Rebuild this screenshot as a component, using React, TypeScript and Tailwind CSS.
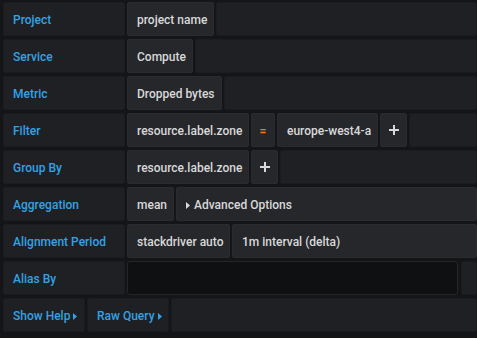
const font = { fontFamily: "Roboto, 'Noto Sans', sans-serif" };

function Label({ children, w = "w-[122px]" }: { children: React.ReactNode; w?: string }) {
  return (
    <div
      className={`${w} flex h-[34px] shrink-0 items-center rounded-[2px] border border-[#1b1c1f] bg-[#1f2023] pl-[9px] pt-[2px] text-[12px] font-medium text-[#33a2e5]`}
    >
      {children}
    </div>
  );
}

function Cell({ children, w, grow }: { children: React.ReactNode; w?: string; grow?: boolean }) {
  return (
    <div
      className={`${w ?? ""} ${grow ? "grow" : "shrink-0"} flex h-[34px] items-center whitespace-nowrap rounded-[2px] border border-[#2a2b2f] bg-[#26272a] pl-[9px] pt-[2px] text-[12px] font-medium text-[#d8d9da]`}
    >
      {children}
    </div>
  );
}

function Filler() {
  return <div className="h-[34px] grow rounded-[2px] border border-[#1b1c1f] bg-[#1f2023]" />;
}

function Plus() {
  return (
    <svg width="10" height="10" viewBox="0 0 10 10" className="mx-auto">
      <rect x="4" y="0" width="2" height="10" fill="#d8d9da" />
      <rect x="0" y="4" width="10" height="2" fill="#d8d9da" />
    </svg>
  );
}

function Caret({ color }: { color: string }) {
  return (
    <svg width="4" height="7" viewBox="0 0 4 7" className="shrink-0">
      <path d="M0 0 L4 3.5 L0 7 Z" fill={color} />
    </svg>
  );
}

export default function App() {
  return (
    <div style={font} className="h-[338px] w-[477px] overflow-hidden bg-[#141517]">
      <div className="flex flex-col gap-[3px] pl-[3px] pt-[2px]">
        <div className="flex gap-[2px]">
          <Label>Project</Label>
          <Cell w="w-[87px]">project name</Cell>
          <Filler />
        </div>
        <div className="flex gap-[2px]">
          <Label>Service</Label>
          <Cell w="w-[66px]">Compute</Cell>
          <Filler />
        </div>
        <div className="flex gap-[2px]">
          <Label>Metric</Label>
          <Cell w="w-[95px]">Dropped bytes</Cell>
          <Filler />
        </div>
        <div className="flex gap-[2px]">
          <Label>Filter</Label>
          <Cell w="w-[122px]">resource.label.zone</Cell>
          <div className="flex h-[34px] w-[24px] shrink-0 items-center justify-center rounded-[2px] border border-[#2a2b2f] bg-[#26272a] pt-[2px] text-[12px] font-bold text-[#eb7b18]">
            =
          </div>
          <Cell w="w-[101px]">europe-west4-a</Cell>
          <div className="flex h-[34px] w-[27px] shrink-0 items-center rounded-[2px] border border-[#2a2b2f] bg-[#26272a]">
            <Plus />
          </div>
          <Filler />
        </div>
        <div className="flex gap-[2px]">
          <Label>Group By</Label>
          <Cell w="w-[122px]">resource.label.zone</Cell>
          <div className="flex h-[34px] w-[27px] shrink-0 items-center rounded-[2px] border border-[#2a2b2f] bg-[#26272a]">
            <Plus />
          </div>
          <Filler />
        </div>
        <div className="flex gap-[2px]">
          <Label>Aggregation</Label>
          <Cell w="w-[47px]">mean</Cell>
          <Cell grow>
            <span className="flex items-center gap-[4px]">
              <Caret color="#d8d9da" />
              Advanced Options
            </span>
          </Cell>
        </div>
        <div className="flex gap-[2px]">
          <Label>Alignment Period</Label>
          <Cell w="w-[103px]">stackdriver auto</Cell>
          <Cell grow>1m interval (delta)</Cell>
        </div>
        <div className="flex gap-[2px]">
          <Label>Alias By</Label>
          <input
            className="h-[34px] w-[331px] shrink-0 rounded-[3px] border border-[#262628] bg-[#0f1012] px-2 text-[12px] text-[#d8d9da] outline-none"
            defaultValue=""
          />
          <div className="ml-[1px] h-[34px] grow rounded-[2px] border border-[#1b1c1f] bg-[#1f2023]" />
        </div>
        <div className="flex gap-[2px]">
          <Label w="w-[82px]">
            <span className="flex items-center gap-[3px]">
              Show Help
              <Caret color="#33a2e5" />
            </span>
          </Label>
          <Label w="w-[82px]">
            <span className="flex items-center gap-[3px]">
              Raw Query
              <Caret color="#33a2e5" />
            </span>
          </Label>
          <Filler />
        </div>
      </div>
    </div>
  );
}
